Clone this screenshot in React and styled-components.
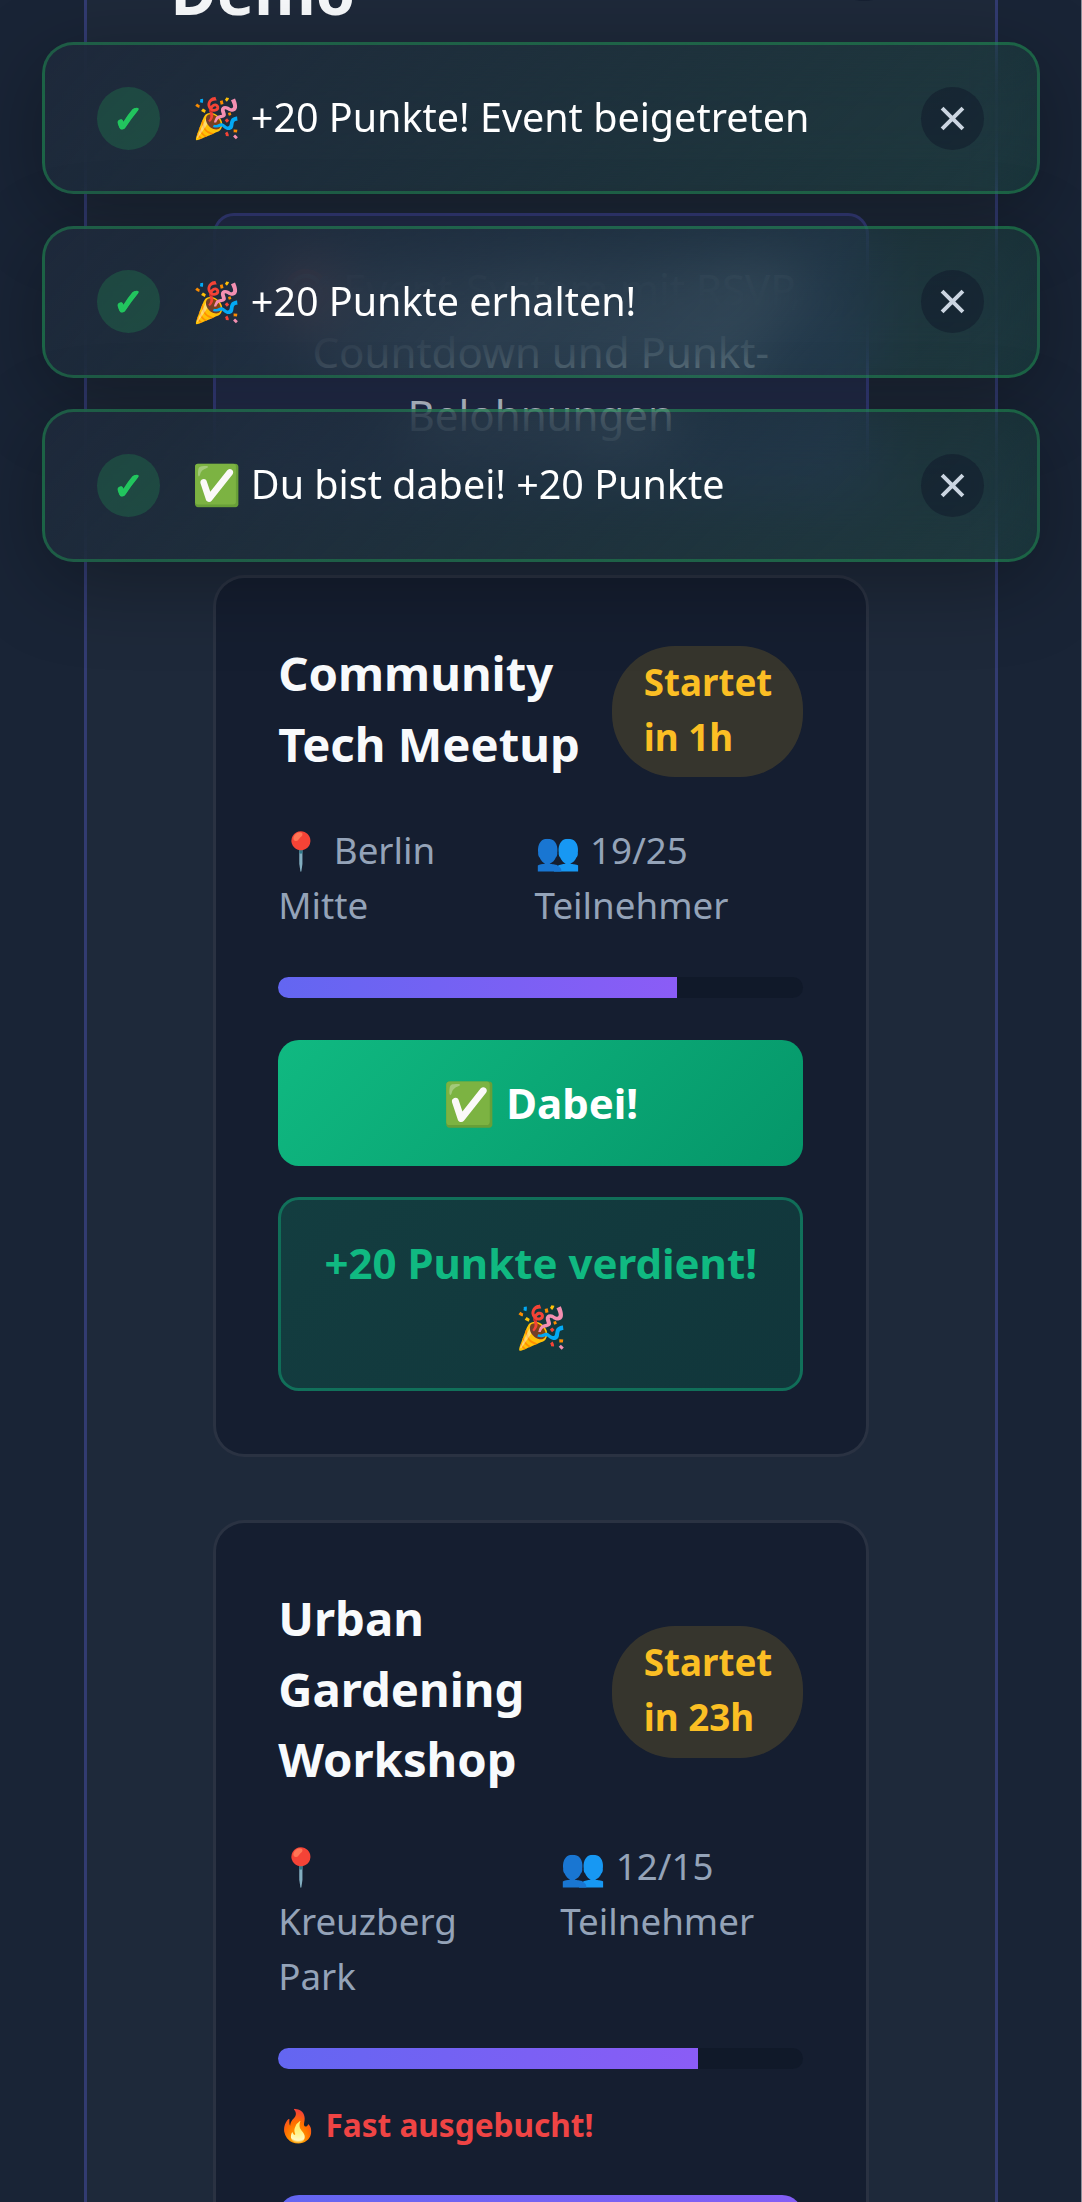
import React from "react";
import styled, { createGlobalStyle } from "styled-components";

/* 1rem = 16 CSS px on a 2.625x phone display */
const Global = createGlobalStyle`
  html { font-size: 42px; background: #8b8f99; overflow: hidden; }
  * { box-sizing: border-box; }
  body {
    margin: 0;
    font-family: "Noto Sans", sans-serif;
    line-height: 1.5;
    color: #f8fafc;
  }
  h1, h2, p { margin: 0; }
`;

const Page = styled.div`
  width: 1081px;
  height: 2202px;
  overflow: hidden;
  padding: 0 83.5px 0 84px;
  background: #192436;
`;

const Panel = styled.main`
  height: 2600px;
  margin-top: -150px;
  padding: 0 83.6px;
  border: 3px solid rgba(99, 102, 241, 0.3);
  background: #1e293a;
`;

const Header = styled.header`
  height: 318px;
  display: flex;
  justify-content: space-between;
  align-items: flex-start;
  padding-top: 62px;
`;

const Heading = styled.h1`
  width: 300px;
  padding-top: 29px;
  font-size: 1.5rem;
  font-weight: 700;
`;

const HeaderClose = styled.button`
  width: 84px;
  height: 84px;
  margin: 2px 5px 0 0;
  border: 0;
  border-radius: 50%;
  background: rgba(15, 23, 42, 0.5);
`;

const Content = styled.div`
  padding: 42px;
`;

const Promo = styled.p`
  margin-bottom: 84px;
  padding: 40.6px 41.6px 42.6px;
  border: 3px solid rgba(99, 102, 241, 0.3);
  border-radius: 0.5rem;
  background: rgba(99, 102, 241, 0.1);
  color: #cbd5e1;
  text-align: center;
`;

const Card = styled.article`
  margin-bottom: 1.5rem;
  padding: 62.6px;
  border: 3px solid rgba(255, 255, 255, 0.09);
  border-radius: 0.75rem;
  background: rgba(15, 23, 42, 0.6);
`;

const CardHead = styled.div`
  display: flex;
  justify-content: space-between;
  align-items: center;
  margin-bottom: 1rem;
`;

const Title = styled.h2`
  margin: -3px 0 3px;
  font-size: 1.125rem;
  font-weight: 700;
`;

const Badge = styled.span`
  width: 191px;
  flex: none;
  padding: 9px 0.75rem 12px;
  border-radius: 1.5rem;
  background: rgba(251, 191, 36, 0.15);
  color: #fbbf24;
  font-size: 0.875rem;
  font-weight: 700;
`;

const Meta = styled.div`
  display: flex;
  gap: 1.5rem;
  margin: -1.5px 0 43.5px;
  color: #94a3b8;
  font-size: 0.875rem;
`;

const Track = styled.div`
  height: 0.5rem;
  margin-bottom: 1rem;
  border-radius: 0.25rem;
  overflow: hidden;
  background: rgba(14, 21, 36, 0.6);
`;

const Fill = styled.div`
  height: 100%;
  background: linear-gradient(90deg, #6366f1, #8b5cf6);
`;

const Warning = styled.p`
  margin: -9.5px 0 46px;
  color: #ef4444;
  font-size: 0.752rem;
  font-weight: 700;
`;

const Join = styled.button`
  display: block;
  width: 100%;
  height: 3rem;
  border: 0;
  border-radius: 0.5rem;
  background: ${(p) =>
    p.$joined
      ? "linear-gradient(135deg, #10b981, #059669)"
      : "linear-gradient(135deg, #6366f1, #8b5cf6)"};
  color: #fff;
  font: 700 1rem/1.5 "Noto Sans", sans-serif;
`;

const Reward = styled.div`
  margin-top: 0.75rem;
  padding: 31.1px;
  border: 3px solid rgba(16, 185, 129, 0.42);
  border-radius: 0.5rem;
  background: linear-gradient(135deg, rgba(16, 185, 129, 0.2), rgba(5, 150, 105, 0.2));
  color: #10b981;
  font-weight: 700;
  text-align: center;
`;

const ToastStack = styled.div`
  position: fixed;
  top: 42px;
  left: 42px;
  width: 997.5px;
  display: flex;
  flex-direction: column;
  gap: 0.75rem;
`;

const Toast = styled.div`
  display: flex;
  align-items: center;
  gap: 0.75rem;
  padding: 41.6px 52.1px;
  border: 3px solid rgba(34, 197, 94, 0.33);
  border-radius: 0.75rem;
  background: linear-gradient(135deg, rgba(30, 41, 59, 0.95), rgba(34, 197, 94, 0.1));
  backdrop-filter: blur(31.5px);
  box-shadow: 0 21px 84px rgba(0, 0, 0, 0.3);
`;

const Check = styled.span`
  width: 1.5rem;
  height: 1.5rem;
  display: flex;
  align-items: center;
  justify-content: center;
  border-radius: 50%;
  background: rgba(34, 197, 94, 0.2);
  color: #22c55e;
  font-size: 0.875rem;
  font-weight: 700;
  -webkit-text-stroke: 0.8px currentColor;
`;

const ToastText = styled.span`
  flex: 1;
  margin: -0.5px 0 0.5px;
  color: #fff;
  font-size: 0.94rem;
  line-height: 1.4;
`;

const Dismiss = styled.button`
  width: 1.5rem;
  height: 1.5rem;
  display: flex;
  align-items: center;
  justify-content: center;
  padding: 0;
  border: 0;
  border-radius: 50%;
  background: rgba(15, 23, 42, 0.5);
  color: #cbd5e1;
`;

const toasts = [
  "🎉 +20 Punkte! Event beigetreten",
  "🎉 +20 Punkte erhalten!",
  "✅ Du bist dabei! +20 Punkte",
];

const events = [
  { title: "Community Tech Meetup", starts: "Startet in 1h", place: "Berlin Mitte", taken: 19, seats: 25, joined: true },
  { title: "Urban Gardening Workshop", starts: "Startet in 23h", place: "Kreuzberg Park", taken: 12, seats: 15, almostFull: true },
];

function EventCard({ event }) {
  return (
    <Card>
      <CardHead>
        <Title>{event.title}</Title>
        <Badge>{event.starts}</Badge>
      </CardHead>
      <Meta>
        <span>📍 {event.place}</span>
        <span>👥 {event.taken}/{event.seats} Teilnehmer</span>
      </Meta>
      <Track>
        <Fill style={{ width: `${(event.taken / event.seats) * 100}%` }} />
      </Track>
      {event.almostFull && <Warning>🔥 Fast ausgebucht!</Warning>}
      <Join $joined={event.joined}>{event.joined ? "✅ Dabei!" : ""}</Join>
      {event.joined && <Reward>+20 Punkte verdient! 🎉</Reward>}
    </Card>
  );
}

export default function App() {
  return (
    <>
      <Global />
      <Page>
        <Panel>
          <Header>
            <Heading>Demo</Heading>
            <HeaderClose />
          </Header>
          <Content>
            <Promo>🎯 Event-System mit RSVP, Countdown und Punkt-Belohnungen</Promo>
            {events.map((e) => (
              <EventCard key={e.title} event={e} />
            ))}
          </Content>
        </Panel>
      </Page>
      <ToastStack>
        {toasts.map((t) => (
          <Toast key={t}>
            <Check>✓</Check>
            <ToastText>{t}</ToastText>
            <Dismiss>
              <svg width="25" height="25" viewBox="0 0 24 24" stroke="currentColor" strokeWidth="3.8" fill="none">
                <path d="M2 2l20 20M22 2l-20 20" />
              </svg>
            </Dismiss>
          </Toast>
        ))}
      </ToastStack>
    </>
  );
}
